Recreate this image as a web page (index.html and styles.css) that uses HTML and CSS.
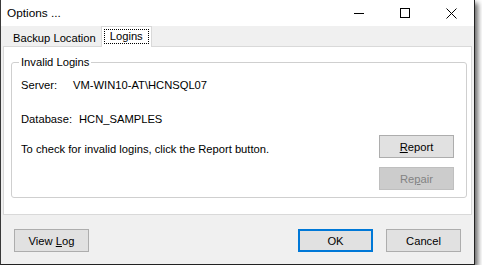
FILE: index.html
```html
<!DOCTYPE html>
<html>
<head>
<meta charset="utf-8">
<link rel="stylesheet" href="styles.css">
</head>
<body>
<div class="window">
  <div class="titlebar">
    <span class="title">Options ...</span>
    <div class="controls">
      <span class="ctl"><svg width="10" height="10" viewBox="0 0 10 10"><path d="M0 5.5H10" stroke="#000" stroke-width="1"/></svg></span>
      <span class="ctl"><svg width="10" height="10" viewBox="0 0 10 10"><rect x="0.5" y="0.5" width="9" height="9" fill="none" stroke="#000" stroke-width="1"/></svg></span>
      <span class="ctl"><svg width="11" height="11" viewBox="0 0 11 11"><path d="M0.5 0.5L10.5 10.5M10.5 0.5L0.5 10.5" stroke="#000" stroke-width="1"/></svg></span>
    </div>
  </div>
  <div class="client">
    <div class="tabs">
      <div class="tab">Backup Location</div>
      <div class="tab active"><span class="focus">Logins</span></div>
    </div>
    <div class="panel">
      <fieldset class="group">
        <legend>Invalid Logins</legend>
        <div class="row server"><span class="lbl">Server:</span><span>VM-WIN10-AT\HCNSQL07</span></div>
        <div class="row db"><span>Database:</span><span class="dbval">HCN_SAMPLES</span></div>
        <div class="action">
          <p class="hint">To check for invalid logins, click the Report button.</p>
          <div class="btncol">
            <button class="btn"><u>R</u>eport</button>
            <button class="btn disabled" disabled>Re<u>p</u>air</button>
          </div>
        </div>
      </fieldset>
    </div>
    <div class="footer">
      <button class="btn">View <u>L</u>og</button>
      <div class="spacer"></div>
      <button class="btn default">OK</button>
      <button class="btn">Cancel</button>
    </div>
  </div>
</div>
</body>
</html>
```
FILE: styles.css
```css
html, body {
  margin: 0;
  padding: 0;
  background: #ffffff;
}
body {
  font-family: "Liberation Sans", Arial, sans-serif;
  font-size: 11.2px;
  color: #000;
}
.window {
  width: 473px;
  border-left: 1px solid #3a3a3a;
  border-right: 1px solid #222222;
  border-bottom: 1px solid #222222;
  box-shadow: 3px 3px 5px rgba(0, 0, 0, 0.6);
  display: flex;
  flex-direction: column;
}
.titlebar {
  height: 26px;
  background: #ffffff;
  display: flex;
  align-items: center;
}
.title {
  font-size: 11.8px;
  line-height: 14px;
  padding-left: 6px;
  flex: 1;
}
.controls {
  display: flex;
  height: 26px;
}
.ctl {
  width: 46px;
  display: flex;
  align-items: center;
  justify-content: center;
}
.ctl svg {
  display: block;
}
.client {
  background: #f0f0f0;
  padding: 0 2px;
  display: flex;
  flex-direction: column;
}
.tabs {
  height: 20px;
  display: flex;
}
.tab {
  padding: 5px 5px 0 10px;
  line-height: 14px;
}
.tab.active {
  height: 21px;
  box-sizing: border-box;
  background: #ffffff;
  border: 1px solid #d9d9d9;
  border-bottom: none;
  padding: 2px 2px 0 2px;
  position: relative;
  z-index: 1;
}
.focus {
  display: block;
  border: 1px dotted #000;
  padding: 0 5px;
  line-height: 13px;
}
.panel {
  height: 169px;
  box-sizing: border-box;
  background: #ffffff;
  border: 1px solid #d9d9d9;
  padding-top: 8px;
}
.group {
  margin: 0 0 0 7px;
  width: 456px;
  box-sizing: border-box;
  border: 1px solid #cfcfcf;
  border-radius: 3px;
  padding: 0 12px 7px 9px;
}
.group legend {
  padding: 0 2px;
  margin-left: -2px;
  line-height: 14px;
}
.row {
  display: flex;
  line-height: 14px;
}
.server {
  margin-top: 9px;
}
.lbl {
  width: 52px;
}
.db {
  margin-top: 20px;
}
.dbval {
  margin-left: 7px;
}
.action {
  margin-top: 9px;
  display: flex;
  justify-content: space-between;
}
.hint {
  margin: 7px 0 0 0;
  line-height: 14px;
}
.btncol {
  display: flex;
  flex-direction: column;
  gap: 9px;
}
.btn {
  width: 75px;
  height: 23px;
  box-sizing: border-box;
  background: #e1e1e1;
  border: 1px solid #adadad;
  font-family: "Liberation Sans", Arial, sans-serif;
  font-size: 11.2px;
  color: #000;
  padding: 0;
  margin: 0;
}
.btn.disabled {
  background: #cccccc;
  border-color: #bfbfbf;
  color: #838383;
}
.btn.default {
  border: 2px solid #0078d7;
}
.footer {
  display: flex;
  padding: 14px 11px 12px 11px;
  gap: 13px;
}
.spacer {
  flex: 1;
}
```
